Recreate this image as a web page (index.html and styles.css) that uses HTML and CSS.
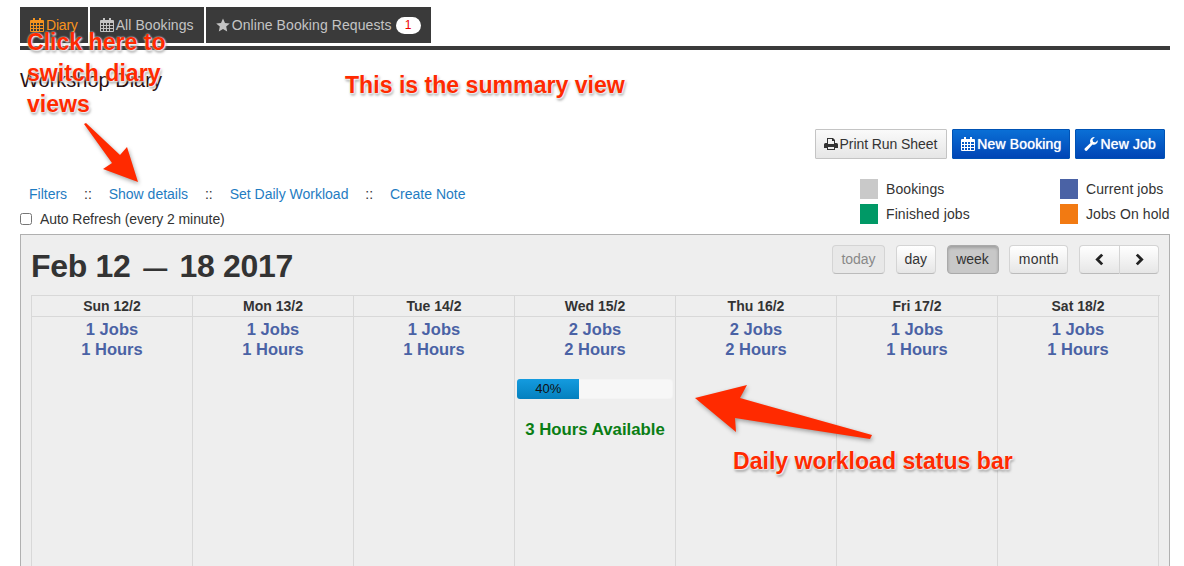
FILE: index.html
```html
<!DOCTYPE html>
<html lang="en">
<head>
<meta charset="utf-8">
<title>Workshop Diary</title>
<link rel="stylesheet" href="styles.css">
</head>
<body>
<svg class="sprite" width="0" height="0" aria-hidden="true">
  <symbol id="cal" viewBox="0 0 14 14">
    <path fill="currentColor" fill-rule="evenodd" d="M3 0h2v2h4V0h2v2h2a1 1 0 0 1 1 1v10a1 1 0 0 1-1 1H1a1 1 0 0 1-1-1V3a1 1 0 0 1 1-1h2zM1 5v2h2V5zm3 0v2h2V5zm3 0v2h2V5zm3 0v2h3V5zM1 8v2h2V8zm3 0v2h2V8zm3 0v2h2V8zm3 0v2h3V8zM1 11v2h2v-2zm3 0v2h2v-2zm3 0v2h2v-2zm3 0v2h3v-2z"/>
  </symbol>
</svg>
<div class="page">
  <nav class="tabs">
    <a class="tab tab-active"><svg class="ico"><use href="#cal"/></svg>Diary</a>
    <a class="tab"><svg class="ico"><use href="#cal"/></svg>All Bookings</a>
    <a class="tab"><svg class="ico" viewBox="0 0 14 14"><path fill="currentColor" d="M7 .5l2 4.400 4.800.5-3.600 3.200 1 4.800L7 11l-4.200 2.400 1-4.800L.2 5.400 5 4.900z"/></svg>Online Booking Requests<span class="badge">1</span></a>
  </nav>
  <h1 class="title">Workshop Diary</h1>
  <div class="actions">
    <button class="btn btn-light"><svg class="ico" viewBox="0 0 14 14"><path fill="currentColor" fill-rule="evenodd" d="M3 1h6l2 2v3h1.500A1.500 1.500 0 0 1 14 7.500V11h-3v2H3v-2H0V7.500A1.500 1.500 0 0 1 1.500 6H3zm1 1v5h6V4H8V2zm0 8v2h6v-2z"/></svg>Print Run Sheet</button>
    <button class="btn btn-blue"><svg class="ico"><use href="#cal"/></svg>New Booking</button>
    <button class="btn btn-blue"><svg class="ico" viewBox="0 0 14 14"><path fill="currentColor" d="M13.800 3.200a4 4 0 0 1-5.300 4.300l-5.200 5.800a1.500 1.500 0 0 1-2.400-2l5.600-5.400A4 4 0 0 1 10.800.2L8.500 2.600l.6 2.200 2.200.6z"/></svg>New Job</button>
  </div>
  <div class="controls">
    <div class="controls-left">
      <div class="links">
        <a>Filters</a><span>::</span><a>Show details</a><span>::</span><a>Set Daily Workload</a><span>::</span><a>Create Note</a>
      </div>
      <label class="refresh"><input type="checkbox">Auto Refresh (every 2 minute)</label>
    </div>
    <div class="legend">
      <div class="legend-item"><i class="sw sw-grey"></i>Bookings</div>
      <div class="legend-item"><i class="sw sw-blue"></i>Current jobs</div>
      <div class="legend-item"><i class="sw sw-green"></i>Finished jobs</div>
      <div class="legend-item"><i class="sw sw-orange"></i>Jobs On hold</div>
    </div>
  </div>
  <section class="calendar">
    <div class="cal-head">
      <h2 class="range">Feb 12 <span class="dash">—</span> 18 2017</h2>
      <div class="cal-tools">
        <button class="fc fc-off fc-today">today</button>
        <button class="fc fc-day">day</button>
        <button class="fc fc-on fc-week">week</button>
        <button class="fc fc-month">month</button>
        <div class="fc-group">
          <button class="fc fc-nav"><svg viewBox="0 0 10 12" class="chev"><path d="M7.500 1.500L3 6l4.500 4.500"/></svg></button>
          <button class="fc fc-nav"><svg viewBox="0 0 10 12" class="chev"><path d="M2.500 1.500L7 6l-4.500 4.500"/></svg></button>
        </div>
      </div>
    </div>
    <div class="grid">
      <div class="dow">Sun 12/2</div><div class="dow">Mon 13/2</div><div class="dow">Tue 14/2</div><div class="dow">Wed 15/2</div><div class="dow">Thu 16/2</div><div class="dow">Fri 17/2</div><div class="dow">Sat 18/2</div>
      <div class="day">1 Jobs<br>1 Hours</div>
      <div class="day">1 Jobs<br>1 Hours</div>
      <div class="day">1 Jobs<br>1 Hours</div>
      <div class="day">2 Jobs<br>2 Hours
        <div class="progress"><div class="progress-fill" style="width:40%">40%</div></div>
        <div class="avail">3 Hours Available</div>
      </div>
      <div class="day">2 Jobs<br>2 Hours</div>
      <div class="day">1 Jobs<br>1 Hours</div>
      <div class="day">1 Jobs<br>1 Hours</div>
    </div>
  </section>
</div>
<div class="note note-switch">Click here to<br>switch diary<br>views</div>
<div class="note note-summary">This is the summary view</div>
<div class="note note-bar">Daily workload status bar</div>
<svg class="arrows" width="1184" height="566" aria-hidden="true">
  <polygon class="arrow" points="84,124 86,123 120,155 127,147 138,182 103,169 112,163"/>
  <polygon class="arrow" points="695,398 747,385 740,398 872,435 870,439 735,418 736,432"/>
</svg>
</body>
</html>
```
FILE: styles.css
```css
html, body { margin: 0; height: 566px; overflow: hidden; background: #fff; }
body { position: relative; font: 14px/20px "Liberation Sans", Arial, sans-serif; color: #333; }
.sprite { position: absolute; }
.page { padding: 7px 14px 0 20px; }
.ico { width: 14px; height: 14px; margin-right: 2px; flex: none; }

.tabs { display: flex; gap: 2px; border-bottom: 4px solid #3a3a3a; padding-bottom: 3px; }
.tab { display: flex; align-items: center; height: 36px; padding: 0 10px; background: #3a3a3a; color: #c4c4c4; white-space: nowrap; letter-spacing: .08px; }
.tab-active { color: #f7931e; letter-spacing: -.2px; }
.badge { margin-left: 4px; min-width: 13px; padding: 0 6px; height: 17px; line-height: 17px; border-radius: 9px; background: #fff; color: #e00; font-size: 12px; text-align: center; }

.title { margin: 20px 0 0; height: 20px; font-size: 20px; line-height: 20px; font-weight: normal; color: #2b1111; }

.actions { display: flex; justify-content: flex-end; gap: 5px; margin: 39px 5px 0 0; }
.btn { display: flex; align-items: center; height: 30px; padding: 0 8px; font: 14px "Liberation Sans", Arial, sans-serif; border-radius: 1px; white-space: nowrap; }
.btn-light { padding-right: 9px; border: 1px solid #c4c4c4; background: linear-gradient(#fafafa, #e6e6e6); color: #333; letter-spacing: -.07px; }
.btn-blue { border: 1px solid #0052b4; background: linear-gradient(#0a6fd6, #0045b5); color: #fff; text-shadow: 0 0 1px #fff; letter-spacing: .15px; }

.controls { display: flex; justify-content: space-between; margin-top: 21px; height: 54px; }
.links { display: flex; gap: 16.900px; padding-left: 9px; margin-top: 4px; color: #333; }
.links a { color: #1f7cc2; }
.refresh { display: flex; align-items: center; margin-top: 5px; letter-spacing: -.07px; }
.refresh input { width: 12px; height: 12px; margin: 0 8px 0 0; }
.legend { display: grid; grid-template-columns: 200px 110px; row-gap: 5px; align-content: start; margin-top: -1px; letter-spacing: .1px; }
.legend-item { display: flex; align-items: center; height: 20px; white-space: nowrap; }
.sw { width: 18px; height: 20px; margin-right: 8px; flex: none; }
.sw-grey { background: #c9c9c9; }
.sw-blue { background: #4a62a5; }
.sw-green { background: #009966; }
.sw-orange { background: #f27a12; }

.calendar { border: 1px solid #b0b0b0; background: #eee; padding: 10px 10px 0; height: 400px; box-sizing: border-box; }
.cal-head { display: flex; justify-content: space-between; align-items: flex-start; height: 50px; }
.range { margin: 0; font-size: 32px; line-height: 42px; font-weight: bold; color: #333; letter-spacing: -.3px; }
.dash { font-size: 24px; margin: 0 4px; vertical-align: 1px; }
.cal-tools { display: flex; gap: 10.750px; }
.fc { height: 29px; padding: 0 0 2px; font: 14px "Liberation Sans", Arial, sans-serif; color: #333; border: 1px solid #d4d4d4; border-bottom-color: #bbb; border-radius: 4px; background: linear-gradient(#fff, #e6e6e6); }
.fc-today { width: 53px; }
.fc-day { width: 40px; }
.fc-week { width: 52px; }
.fc-month { width: 59px; letter-spacing: .2px; }
.fc-off { color: #888; background: #e8e8e8; }
.fc-on { background: #c8c8c8; border-color: #aaa; box-shadow: inset 0 2px 3px rgba(0,0,0,.2); }
.fc-group { display: flex; }
.fc-nav { width: 40px; padding: 0; display: flex; align-items: center; justify-content: center; }
.fc-nav:first-child { border-radius: 4px 0 0 4px; border-right: 0; }
.fc-nav:last-child { border-radius: 0 4px 4px 0; }
.chev { width: 11px; height: 13px; fill: none; stroke: #222; stroke-width: 2.600; }

.grid { display: grid; grid-template-columns: repeat(7, 161px); grid-template-rows: 21px 1fr; height: 300px; width: 1128px; border: solid #d8d8d8; border-width: 1px 0 0 1px; }
.dow { border: solid #d8d8d8; border-width: 0 1px 1px 0; font-weight: bold; text-align: center; line-height: 21px; font-size: 14px; color: #333; }
.day { border-right: 1px solid #d8d8d8; padding-top: 2px; text-align: center; font: bold 16.500px/20px "Liberation Sans", Arial, sans-serif; color: #4a62a5; }
.progress { margin: 20px 2px 0; height: 20px; border-radius: 3px; background: #f7f7f7; overflow: hidden; box-shadow: inset 0 0 2px rgba(0,0,0,.06); }
.progress-fill { height: 100%; background: linear-gradient(#149bdf, #0480be); font: 13px/20px "Liberation Sans", Arial, sans-serif; color: #111; text-align: center; }
.avail { margin-top: 21px; color: #0a7d14; font-size: 16.800px; }

.note { position: absolute; font: bold 23.100px/31px "Liberation Sans", Arial, sans-serif; color: #ff2a00; white-space: nowrap; text-shadow: 0 0 2px #fff, 1px 1px 2px #fff, 1px 2px 3px rgba(0,0,0,.55); }
.note-switch { left: 27px; top: 27px; }
.note-summary { left: 345px; top: 70px; }
.note-bar { left: 733px; top: 446px; }
.arrows { position: absolute; left: 0; top: 0; pointer-events: none; }
.arrow { fill: #ff2a00; filter: drop-shadow(1px 2px 2px rgba(0,0,0,.35)); }
```
